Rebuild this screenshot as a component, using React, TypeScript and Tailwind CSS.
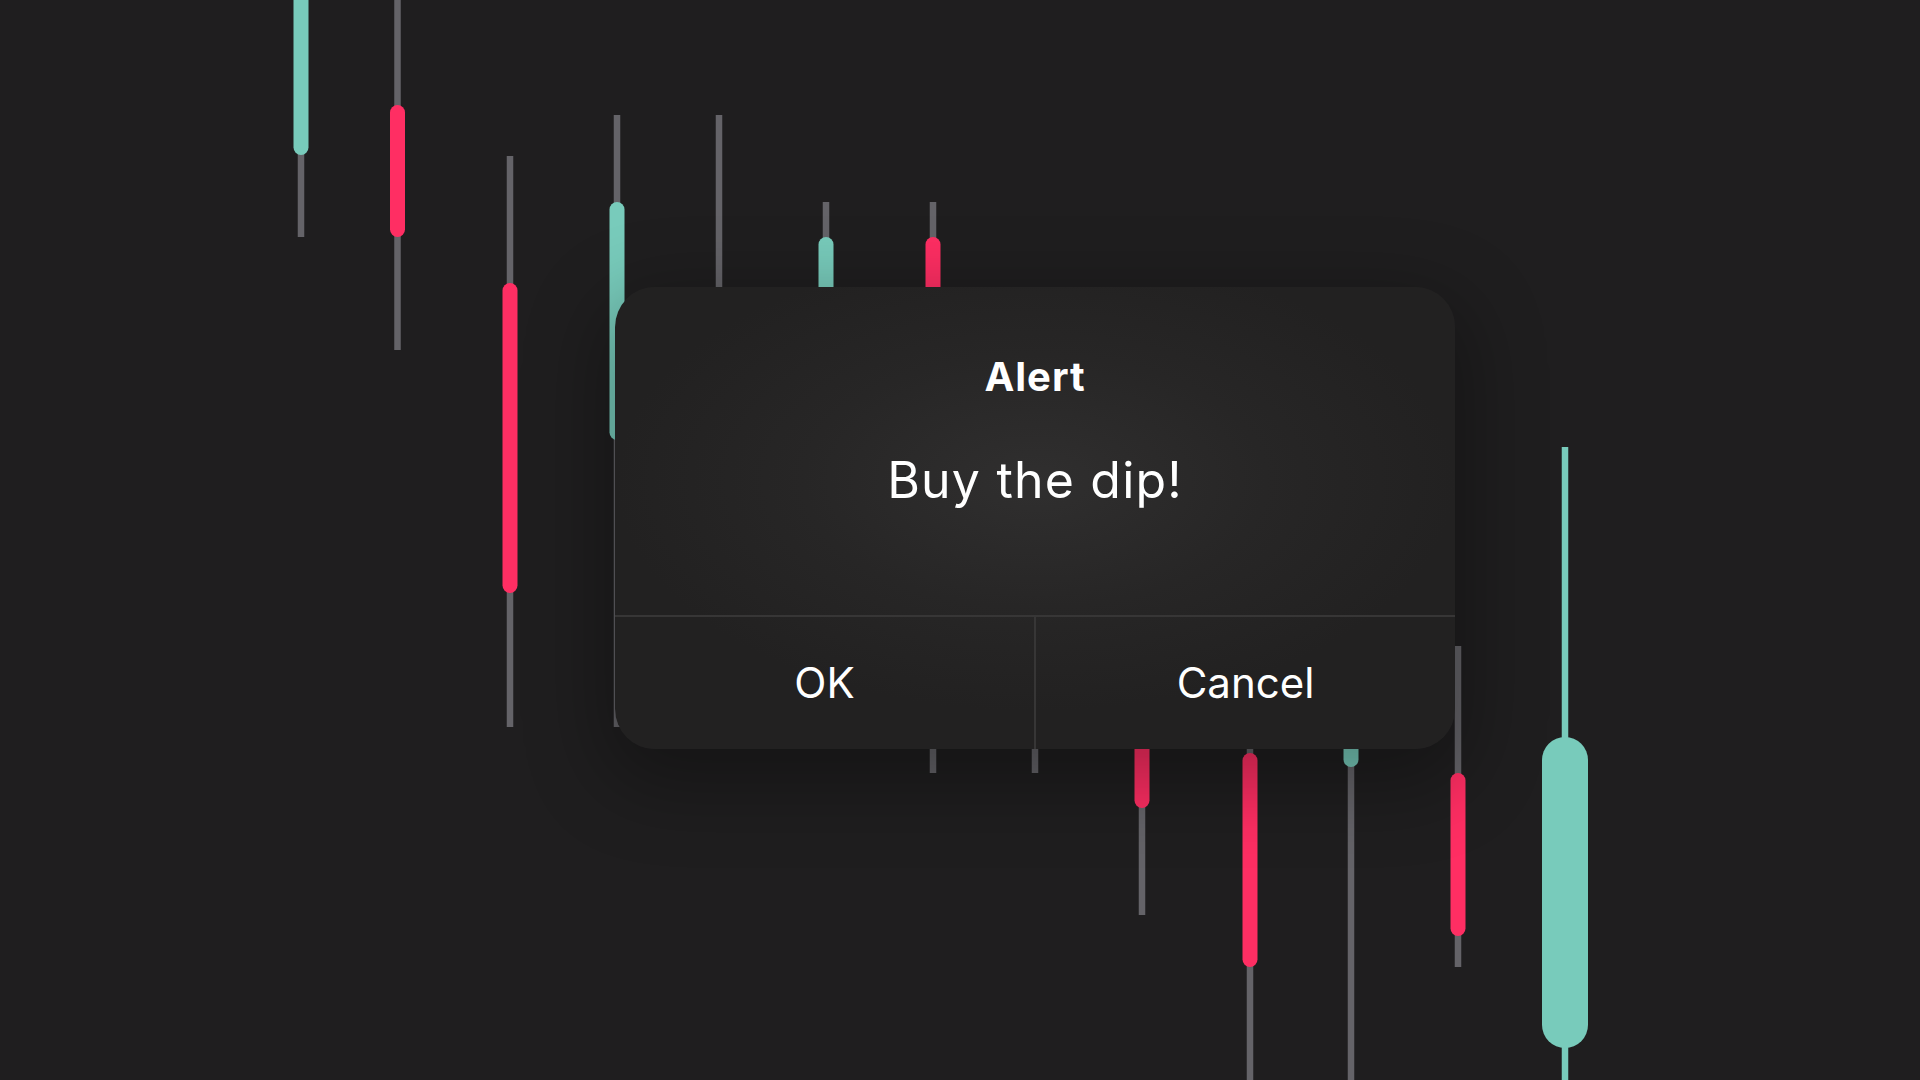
import React from "react";

type Candle = {
  x: number;
  wick: [number, number];
  body: [number, number];
  up: boolean;
  w?: number;
};

const TEAL = "#78cbbb";
const RED = "#ff2e63";
const WICK = "#646368";

const candles: Candle[] = [
  { x: 301, wick: [0, 237], body: [-40, 155], up: true },
  { x: 397.5, wick: [0, 350], body: [105, 237], up: false },
  { x: 510, wick: [156, 727], body: [283, 593], up: false },
  { x: 617, wick: [115, 727], body: [202, 440], up: true },
  { x: 719, wick: [115, 420], body: [330, 390], up: true },
  { x: 826, wick: [202, 520], body: [237, 470], up: true },
  { x: 933, wick: [202, 773], body: [237, 650], up: false },
  { x: 1035, wick: [560, 773], body: [600, 700], up: true },
  { x: 1142, wick: [500, 915], body: [600, 808], up: false },
  { x: 1250, wick: [690, 1080], body: [753, 967], up: false },
  { x: 1351, wick: [600, 1080], body: [650, 767], up: true },
  { x: 1458, wick: [646, 967], body: [773, 936], up: false },
  { x: 1565, wick: [447, 1080], body: [737, 1048], up: true, w: 46 },
];

function Chart() {
  return (
    <svg className="absolute inset-0 h-full w-full" viewBox="0 0 1920 1080">
      {candles.map((c) => {
        const w = c.w ?? 15;
        return (
          <g key={c.x}>
            <rect x={c.x - 3.25} y={c.wick[0]} width={6.5} height={c.wick[1] - c.wick[0]} fill={c.w ? TEAL : WICK} />
            <rect
              x={c.x - w / 2}
              y={c.body[0]}
              width={w}
              height={c.body[1] - c.body[0]}
              rx={w / 2}
              fill={c.up ? TEAL : RED}
            />
          </g>
        );
      })}
    </svg>
  );
}

export default function App() {
  return (
    <div
      className="relative h-[1080px] w-[1920px] overflow-hidden bg-[#1f1e1f] text-white"
      style={{ fontFamily: "Inter, 'Noto Sans', sans-serif" }}
    >
      <Chart />

      {/* Alert dialog */}
      <div className="absolute left-[615px] top-[287px] flex h-[462px] w-[840px] flex-col overflow-hidden rounded-[40px] bg-[radial-gradient(ellipse_420px_230px_at_50%_42%,#302f2f_0%,#272626_55%,#222121_100%)] shadow-[0_24px_80px_12px_rgba(0,0,0,0.32)]">
        <div className="flex h-[328px] flex-col items-center pt-[70px]">
          <h2 className="text-[40px] font-bold leading-[40px] tracking-[1px]">Alert</h2>
          <p className="mt-[58px] text-[50px] leading-[50px] tracking-[1.2px]">Buy the dip!</p>
        </div>
        <div className="flex flex-1 border-t-2 border-[#373636]">
          <button className="flex flex-1 items-center justify-center text-[42px] leading-[42px]">
            OK
          </button>
          <div className="w-[2px] bg-[#373636]" />
          <button className="flex flex-1 items-center justify-center text-[42px] leading-[42px]">
            Cancel
          </button>
        </div>
      </div>
    </div>
  );
}
